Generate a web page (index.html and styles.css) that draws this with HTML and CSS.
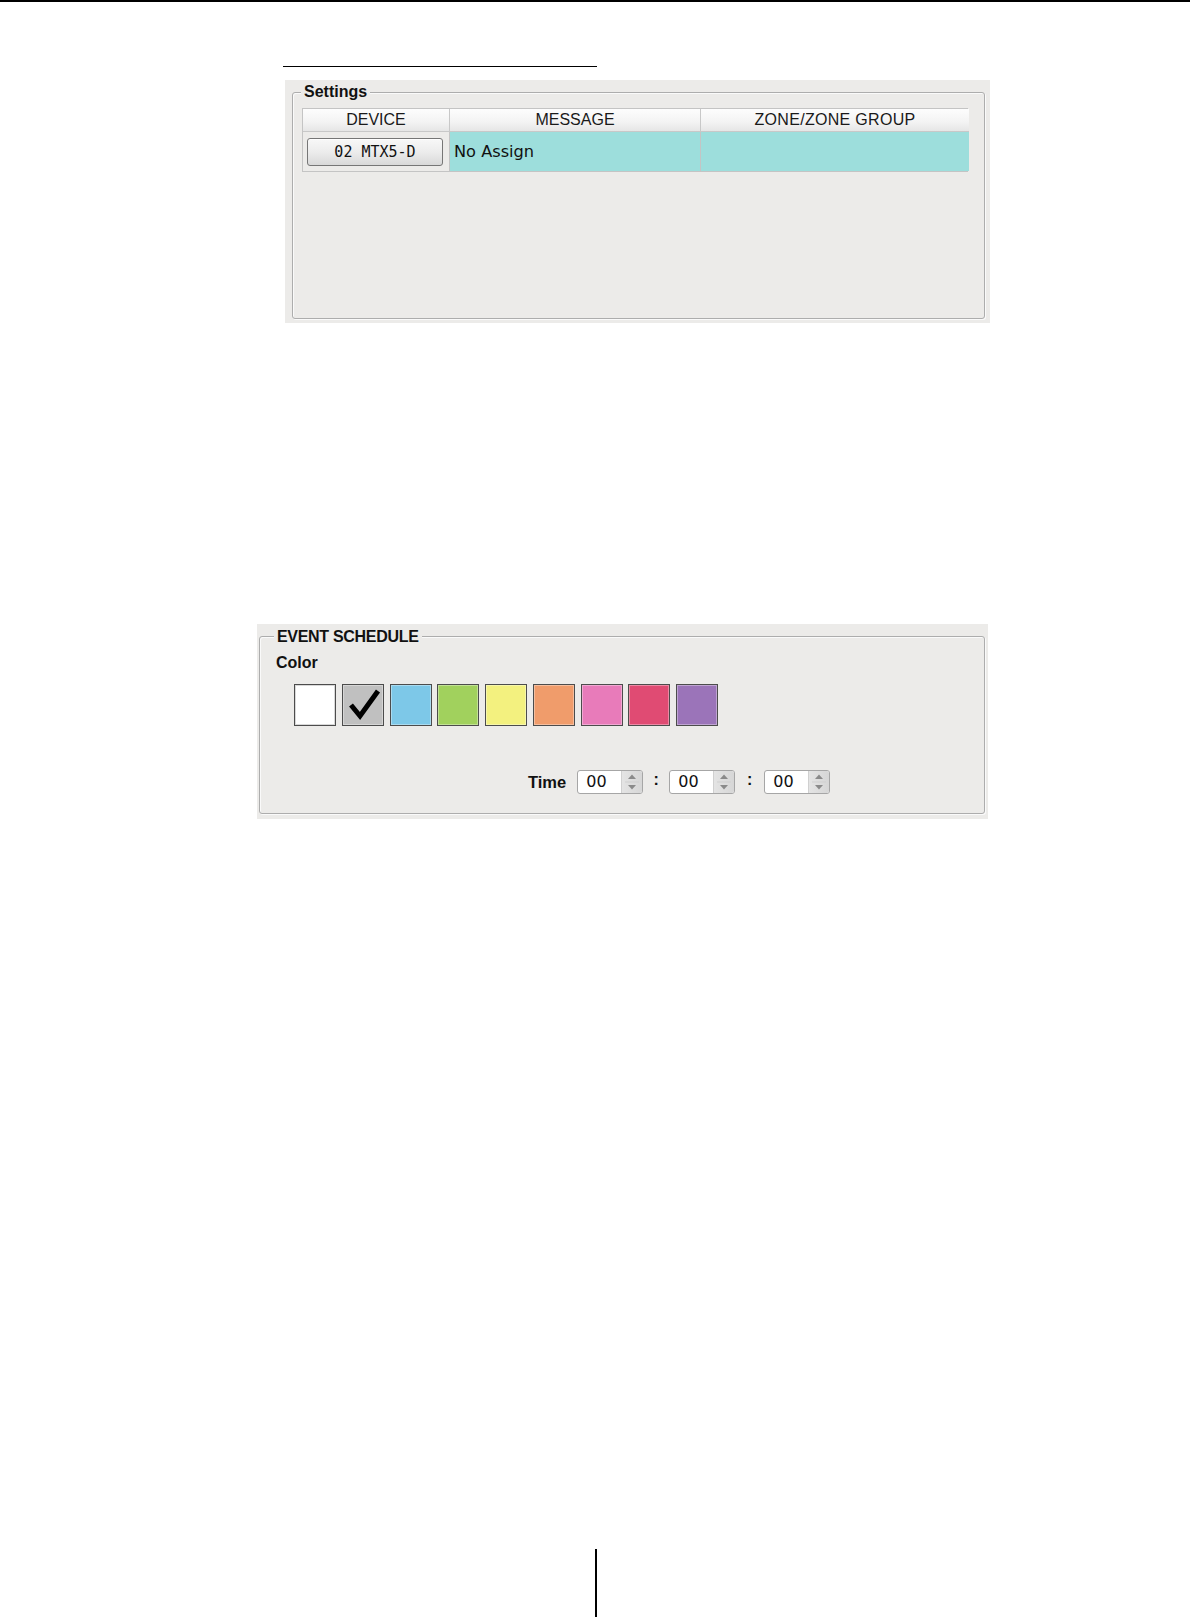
FILE: index.html
```html
<!DOCTYPE html>
<html>
<head>
<meta charset="utf-8">
<link rel="stylesheet" href="styles.css">
</head>
<body>
<div class="topbar"></div>
<div class="head-rule"></div>

<section class="panel panel-settings">
  <div class="group group-settings">
    <div class="legend legend-settings"><span>Settings</span></div>
    <div class="grid-table">
      <div class="th">DEVICE</div>
      <div class="th">MESSAGE</div>
      <div class="th th-zone th-last">ZONE/ZONE GROUP</div>
      <div class="td td-device"><button class="dev-btn">02 MTX5-D</button></div>
      <div class="td td-msg">No Assign</div>
      <div class="td td-zone td-last"></div>
    </div>
  </div>
</section>

<section class="panel panel-event">
  <div class="group group-event">
    <div class="legend legend-event"><span>EVENT SCHEDULE</span></div>
    <div class="color-label">Color</div>
    <div class="swatches">
      <div class="sw sw-white"></div>
      <div class="sw sw-gray">
        <svg class="check" viewBox="0 0 40 40" width="40" height="40"><path d="M8 20 L17 31 L35 6" fill="none" stroke="#000" stroke-width="5" stroke-linejoin="miter" stroke-linecap="butt"/></svg>
      </div>
      <div class="sw sw-blue"></div>
      <div class="sw sw-green"></div>
      <div class="sw sw-yellow"></div>
      <div class="sw sw-orange"></div>
      <div class="sw sw-pink"></div>
      <div class="sw sw-red"></div>
      <div class="sw sw-purple"></div>
    </div>
    <div class="time-row">
      <span class="time-label">Time</span>
      <div class="spin"><span class="spin-val">00</span><span class="spin-btns"><svg viewBox="0 0 20 22" width="20" height="22"><path d="M6 8 L10 3.5 L14 8 Z" fill="#8a8a8a"/><path d="M6 14 L10 18.5 L14 14 Z" fill="#8a8a8a"/><line x1="3" y1="11" x2="17" y2="11" stroke="#cfcfcf" stroke-width="1"/></svg></span></div>
      <span class="colon">:</span>
      <div class="spin"><span class="spin-val">00</span><span class="spin-btns"><svg viewBox="0 0 20 22" width="20" height="22"><path d="M6 8 L10 3.5 L14 8 Z" fill="#8a8a8a"/><path d="M6 14 L10 18.5 L14 14 Z" fill="#8a8a8a"/><line x1="3" y1="11" x2="17" y2="11" stroke="#cfcfcf" stroke-width="1"/></svg></span></div>
      <span class="colon colon-wide">:</span>
      <div class="spin"><span class="spin-val">00</span><span class="spin-btns"><svg viewBox="0 0 20 22" width="20" height="22"><path d="M6 8 L10 3.5 L14 8 Z" fill="#8a8a8a"/><path d="M6 14 L10 18.5 L14 14 Z" fill="#8a8a8a"/><line x1="3" y1="11" x2="17" y2="11" stroke="#cfcfcf" stroke-width="1"/></svg></span></div>
    </div>
  </div>
</section>

<div class="page-mark"></div>
</body>
</html>
```

FILE: styles.css
```css
html, body {
  margin: 0;
  padding: 0;
  background: #fff;
}
body {
  font-family: "Liberation Sans", Arial, sans-serif;
  color: #111;
  overflow: hidden;
}
.topbar {
  height: 2px;
  background: #000;
}
.head-rule {
  margin-top: 64px;
  margin-left: 283px;
  width: 314px;
  height: 1px;
  background: #000;
}
.panel {
  box-sizing: border-box;
  background: #ecebe9;
}
.panel-settings {
  margin-top: 13px;
  margin-left: 285px;
  width: 705px;
  height: 243px;
  padding: 12px 5px 4px 7px;
}
.group {
  box-sizing: border-box;
  height: 100%;
  border: 1px solid #adadad;
  border-radius: 3px;
  box-shadow: inset 1px 1px 0 #fafafa, 1px 1px 0 #fafafa;
}
.legend {
  height: 18px;
  line-height: 18px;
  font-size: 16px;
  font-weight: bold;
}
.legend span {
  display: inline-block;
  background: #ecebe9;
  padding: 0 3px;
}
.legend-settings {
  margin-top: -10px;
  margin-left: 8px;
}
.grid-table {
  margin-top: 7px;
  margin-left: 9px;
  width: 666px;
  display: grid;
  grid-template-columns: 147px 251px 268px;
  grid-template-rows: 23px 39px;
  box-sizing: border-box;
  border: 1px solid #c4c4c4;
}
.th {
  box-sizing: border-box;
  background: linear-gradient(#fdfdfd, #f3f3f3 60%, #e6e6e6);
  border-right: 1px solid #c8c8c8;
  border-bottom: 1px solid #c8c8c8;
  font-size: 16px;
  line-height: 22px;
  text-align: center;
  color: #1a1a1a;
}
.th-zone { letter-spacing: 0.3px; }
.th-last { border-right: none; }
.td {
  box-sizing: border-box;
  border-right: 1px solid #c4c4c4;
  display: flex;
  align-items: center;
}
.td-last { border-right: none; }
.td-device {
  background: #ecebe9;
  justify-content: center;
  padding-right: 2px;
}
.td-msg, .td-zone {
  background: #9ddedc;
}
.td-msg {
  padding-left: 4px;
  font-family: "DejaVu Sans", sans-serif;
  font-size: 16.2px;
  color: #111;
}
.dev-btn {
  width: 136px;
  height: 28px;
  margin: 0;
  padding: 0;
  border: 1px solid #767676;
  border-radius: 3px;
  background: linear-gradient(#f8f8f8, #ececec 50%, #d9d9d9);
  box-shadow: inset 0 1px 0 #fff;
  font-family: "DejaVu Sans Mono", monospace;
  font-size: 15px;
  color: #111;
}
.panel-event {
  margin-top: 301px;
  margin-left: 257px;
  width: 731px;
  height: 195px;
  padding: 12px 3px 5px 2px;
}
.legend-event {
  margin-top: -9px;
  margin-left: 14px;
}
.legend-event span { letter-spacing: -0.3px; }
.color-label {
  margin-top: 8px;
  margin-left: 16px;
  height: 18px;
  line-height: 18px;
  font-size: 16px;
  font-weight: bold;
}
.swatches {
  margin-top: 12px;
  margin-left: 34px;
  display: flex;
  gap: 5.75px;
}
.sw {
  box-sizing: border-box;
  width: 42px;
  height: 42px;
  border: 1px solid #4c4c4c;
  box-shadow: inset 0 0 0 1px rgba(255, 255, 255, 0.35);
  display: flex;
  align-items: center;
  justify-content: center;
}
.sw-white { background: #ffffff; box-shadow: inset 0 0 0 1px #d8d8d8; }
.sw-gray { background: #c0c0c0; }
.sw-blue { background: #7dc8e8; }
.sw-green { background: #a1d15d; }
.sw-yellow { background: #f3f17f; }
.sw-orange { background: #f09c6b; }
.sw-pink { background: #e87bba; }
.sw-red { background: #e04b73; }
.sw-purple { background: #9b74b9; }
.check { display: block; }
.time-row {
  margin-top: 44px;
  margin-left: 268px;
  height: 24px;
  display: flex;
  align-items: center;
}
.time-label {
  font-size: 16.5px;
  font-weight: bold;
  margin-right: 11px;
}
.spin {
  box-sizing: border-box;
  width: 66px;
  height: 24px;
  border: 1px solid #a6a6a6;
  border-radius: 3px;
  background: #fff;
  display: flex;
  overflow: hidden;
}
.spin-val {
  flex: 1;
  padding-left: 8px;
  font-family: "DejaVu Sans", sans-serif;
  font-size: 16px;
  line-height: 22px;
  color: #111;
}
.spin-btns {
  width: 20px;
  background: linear-gradient(90deg, #e4e4e4, #d6d6d6);
  border-left: 1px solid #d0d0d0;
  display: flex;
  align-items: center;
}
.spin-btns svg { display: block; }
.colon {
  width: 26px;
  text-align: center;
  font-size: 16px;
  font-weight: bold;
  position: relative;
  top: -2px;
}
.colon-wide { width: 29px; }
.page-mark {
  margin-top: 730px;
  margin-left: 595px;
  width: 2px;
  height: 68px;
  background: #000;
}
```
